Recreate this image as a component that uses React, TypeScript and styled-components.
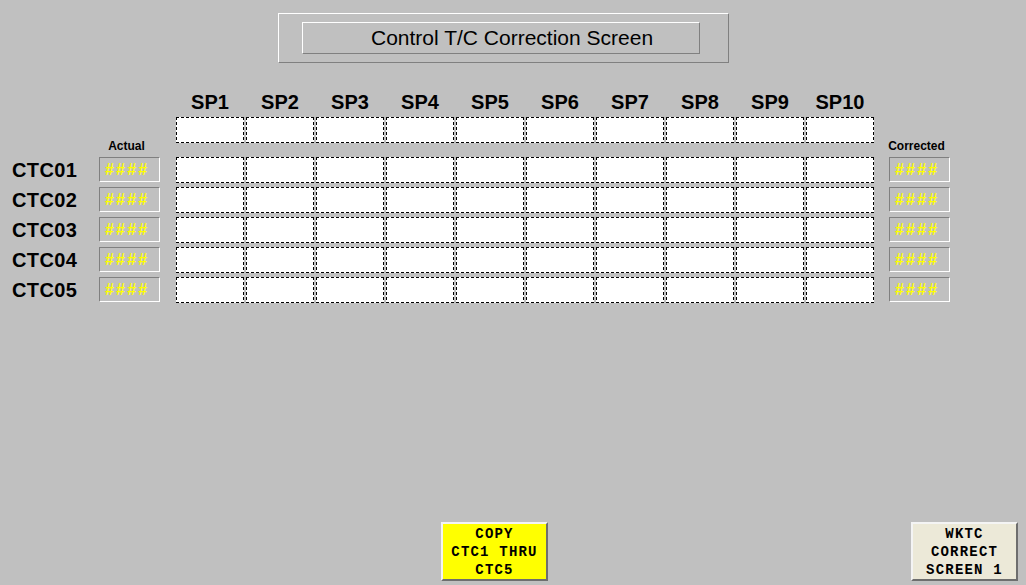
import React from 'react';
import styled, { createGlobalStyle } from 'styled-components';

const GlobalStyle = createGlobalStyle`
  html, body {
    margin: 0;
    padding: 0;
    background: #c0c0c0;
  }
`;

const SETPOINTS = ['SP1', 'SP2', 'SP3', 'SP4', 'SP5', 'SP6', 'SP7', 'SP8', 'SP9', 'SP10'];
const CHANNELS = ['CTC01', 'CTC02', 'CTC03', 'CTC04', 'CTC05'];

const App = () => {
  return (
    <Screen>
      <GlobalStyle />
      <TitleFrame>
        <TitleInner>Control T/C Correction Screen</TitleInner>
      </TitleFrame>

      <Table>
        <Row>
          <LabelSpacer />
          <SideSpacer />
          <Cells>
            {SETPOINTS.map((sp) => (
              <ColumnHead key={sp}>{sp}</ColumnHead>
            ))}
          </Cells>
        </Row>

        <Row>
          <LabelSpacer />
          <SideSpacer />
          <Cells>
            {SETPOINTS.map((sp) => (
              <EntryCell key={sp} />
            ))}
          </Cells>
        </Row>

        <CaptionRow>
          <LabelSpacer />
          <SideCaption>Actual</SideCaption>
          <Cells />
          <SideCaption $right>Corrected</SideCaption>
        </CaptionRow>

        {CHANNELS.map((ch) => (
          <Row key={ch}>
            <ChannelLabel>{ch}</ChannelLabel>
            <ValueBox>####</ValueBox>
            <Cells>
              {SETPOINTS.map((sp) => (
                <EntryCell key={sp} />
              ))}
            </Cells>
            <ValueBox $right>####</ValueBox>
          </Row>
        ))}
      </Table>

      <Footer>
        <PanelButton $bg="#ffff00">
          COPY
          <br />
          CTC1 THRU
          <br />
          CTC5
        </PanelButton>
        <PanelButton $bg="#ece9d8">
          WKTC
          <br />
          CORRECT
          <br />
          SCREEN 1
        </PanelButton>
      </Footer>
    </Screen>
  );
};

export default App;

const Screen = styled.div`
  width: 1026px;
  height: 585px;
  background: #c0c0c0;
  display: flex;
  flex-direction: column;
  box-sizing: border-box;
  padding-top: 13px;
  font-family: 'Liberation Sans', Arial, sans-serif;
  overflow: hidden;
`;

const TitleFrame = styled.div`
  margin-left: 278px;
  width: 451px;
  height: 50px;
  box-sizing: border-box;
  border-top: 1px solid #ffffff;
  border-left: 1px solid #ffffff;
  border-bottom: 1px solid #808080;
  border-right: 1px solid #808080;
  display: flex;
  align-items: center;
  padding-left: 23px;
`;

const TitleInner = styled.div`
  width: 398px;
  height: 32px;
  box-sizing: border-box;
  border-top: 1px solid #ffffff;
  border-left: 1px solid #ffffff;
  border-bottom: 1px solid #808080;
  border-right: 1px solid #808080;
  font-size: 21px;
  color: #000;
  line-height: 29px;
  padding-left: 68px;
  white-space: nowrap;
`;

const Table = styled.div`
  margin-top: 28px;
  display: flex;
  flex-direction: column;
  gap: 4px;
`;

const Row = styled.div`
  display: flex;
  align-items: center;
  padding-left: 12px;
`;

const CaptionRow = styled(Row)`
  height: 14px;
  margin-top: -8px;
  align-items: flex-end;
`;

const LabelSpacer = styled.div`
  width: 87px;
  flex: none;
`;

const SideSpacer = styled.div`
  width: 61px;
  flex: none;
`;

const Cells = styled.div`
  display: flex;
  gap: 2px;
  width: 698px;
  margin: 0 15px 0 16px;
  flex: none;
`;

const ColumnHead = styled.div`
  width: 68px;
  height: 22px;
  line-height: 22px;
  text-align: center;
  font-size: 20px;
  font-weight: bold;
  color: #000;
`;

const dashH = 'repeating-linear-gradient(90deg, #000 0 3px, transparent 3px 5px)';
const dashV = 'repeating-linear-gradient(180deg, #000 0 3px, transparent 3px 5px)';

const EntryCell = styled.div`
  width: 68px;
  height: 26px;
  background:
    ${dashH} top left / 100% 1px no-repeat,
    ${dashH} bottom left / 100% 1px no-repeat,
    ${dashV} top left / 1px 100% no-repeat,
    ${dashV} top right / 1px 100% no-repeat,
    #ffffff;
`;

const SideCaption = styled.div<{ $right?: boolean }>`
  width: 61px;
  flex: none;
  text-align: center;
  font-size: 12px;
  font-weight: bold;
  line-height: 14px;
  color: #000;
  margin-left: ${(p) => (p.$right ? '0' : '-3px')};
`;

const ChannelLabel = styled.div`
  width: 87px;
  flex: none;
  font-size: 20px;
  font-weight: bold;
  letter-spacing: 0.4px;
  color: #000;
  line-height: 26px;
`;

const ValueBox = styled.div<{ $right?: boolean }>`
  width: 61px;
  height: 25px;
  flex: none;
  box-sizing: border-box;
  align-self: flex-start;
  border-top: 1px solid #808080;
  border-left: 1px solid #808080;
  border-bottom: 1px solid #ffffff;
  border-right: 1px solid #ffffff;
  background: #c0c0c0;
  color: #ffff00;
  font-size: 16px;
  font-weight: bold;
  letter-spacing: 2.2px;
  line-height: 23px;
  padding-left: 5px;
  white-space: nowrap;
`;

const Footer = styled.div`
  margin-top: auto;
  display: flex;
  gap: 363px;
  padding: 0 0 4px 441px;
`;

const PanelButton = styled.div<{ $bg: string }>`
  width: 107px;
  height: 59px;
  box-sizing: border-box;
  background: ${(p) => p.$bg};
  border-top: 2px solid #f4f4f4;
  border-left: 2px solid #f4f4f4;
  border-bottom: 2px solid #6e6e6e;
  border-right: 2px solid #6e6e6e;
  display: flex;
  align-items: center;
  justify-content: center;
  text-align: center;
  font-family: 'Liberation Mono', 'Courier New', monospace;
  font-size: 14px;
  font-weight: bold;
  letter-spacing: 1.2px;
  line-height: 18px;
  color: #000;
`;
